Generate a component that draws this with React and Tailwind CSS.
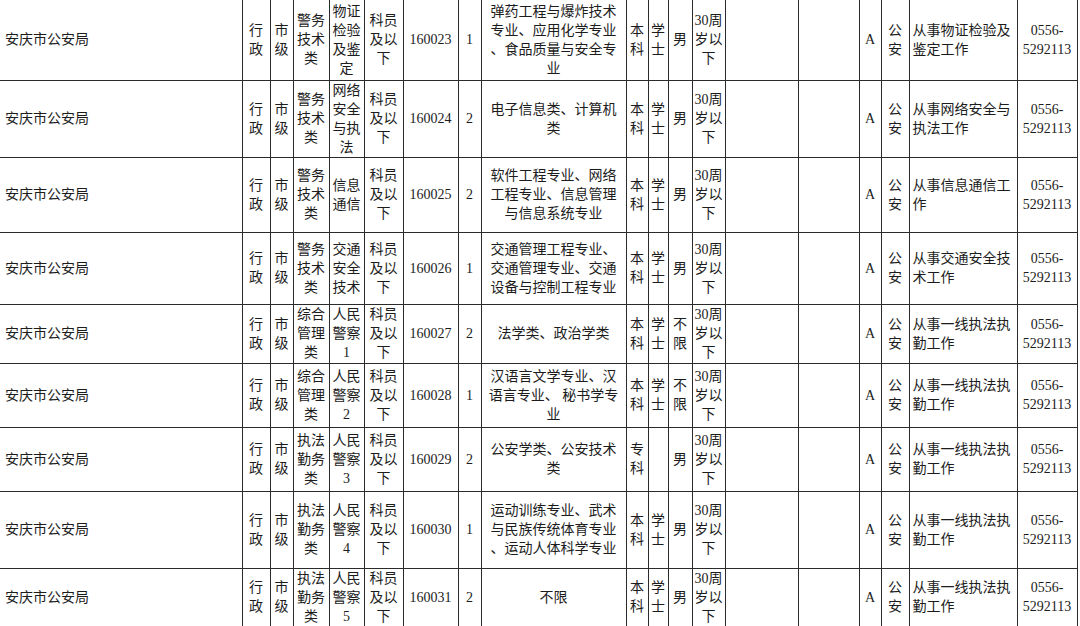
import React from 'react';

const colWidths = [242, 28, 23, 36, 35, 39, 55, 23, 145, 22, 20, 24, 33, 73, 61, 22, 28, 108, 60];

const rows = [
    { h: 80, type: ['行', '政'], level: ['市', '级'], cat: ['警务', '技术', '类'], post: ['物证', '检验', '及鉴', '定'], code: '160023', num: '1',
        major: ['弹药工程与爆炸技术', '专业、应用化学专业', '、食品质量与安全专', '业'], edu: ['本', '科'], deg: ['学', '士'], sex: ['男'], duty: ['从事物证检验及', '鉴定工作'] },
    { h: 76, type: ['行', '政'], level: ['市', '级'], cat: ['警务', '技术', '类'], post: ['网络', '安全', '与执', '法'], code: '160024', num: '2',
        major: ['电子信息类、计算机', '类'], edu: ['本', '科'], deg: ['学', '士'], sex: ['男'], duty: ['从事网络安全与', '执法工作'] },
    { h: 75, type: ['行', '政'], level: ['市', '级'], cat: ['警务', '技术', '类'], post: ['信息', '通信'], code: '160025', num: '2',
        major: ['软件工程专业、网络', '工程专业、信息管理', '与信息系统专业'], edu: ['本', '科'], deg: ['学', '士'], sex: ['男'], duty: ['从事信息通信工', '作'] },
    { h: 72, type: ['行', '政'], level: ['市', '级'], cat: ['警务', '技术', '类'], post: ['交通', '安全', '技术'], code: '160026', num: '1',
        major: ['交通管理工程专业、', '交通管理专业、交通', '设备与控制工程专业'], edu: ['本', '科'], deg: ['学', '士'], sex: ['男'], duty: ['从事交通安全技', '术工作'] },
    { h: 59, type: ['行', '政'], level: ['市', '级'], cat: ['综合', '管理', '类'], post: ['人民', '警察', '1'], code: '160027', num: '2',
        major: ['法学类、政治学类'], edu: ['本', '科'], deg: ['学', '士'], sex: ['不', '限'], duty: ['从事一线执法执', '勤工作'] },
    { h: 64, type: ['行', '政'], level: ['市', '级'], cat: ['综合', '管理', '类'], post: ['人民', '警察', '2'], code: '160028', num: '1',
        major: ['汉语言文学专业、汉', '语言专业、 秘书学专', '业'], edu: ['本', '科'], deg: ['学', '士'], sex: ['不', '限'], duty: ['从事一线执法执', '勤工作'] },
    { h: 64, type: ['行', '政'], level: ['市', '级'], cat: ['执法', '勤务', '类'], post: ['人民', '警察', '3'], code: '160029', num: '2',
        major: ['公安学类、公安技术', '类'], edu: ['专', '科'], deg: [], sex: ['男'], duty: ['从事一线执法执', '勤工作'] },
    { h: 77, type: ['行', '政'], level: ['市', '级'], cat: ['执法', '勤务', '类'], post: ['人民', '警察', '4'], code: '160030', num: '1',
        major: ['运动训练专业、武术', '与民族传统体育专业', '、运动人体科学专业'], edu: ['本', '科'], deg: ['学', '士'], sex: ['男'], duty: ['从事一线执法执', '勤工作'] },
    { h: 58, type: ['行', '政'], level: ['市', '级'], cat: ['执法', '勤务', '类'], post: ['人民', '警察', '5'], code: '160031', num: '2',
        major: ['不限'], edu: ['本', '科'], deg: ['学', '士'], sex: ['男'], duty: ['从事一线执法执', '勤工作'] },
];

const Lines = ({ lines }) => (
    <>
        {lines.map((line, i) => (
            <React.Fragment key={i}>
                {i > 0 && <br />}
                {line}
            </React.Fragment>
        ))}
    </>
);

const cell = 'border border-[#2b2b2b] p-0 text-center align-middle whitespace-nowrap';

const App = () => {
    return (
        <div
            className="w-[1080px] h-[626px] overflow-hidden bg-white text-[#1c1c1c] text-[14px] leading-[19px]"
            style={{ fontFamily: '"Liberation Serif", "Noto Sans CJK SC", serif' }}
        >
            <table className="table-fixed border-collapse w-[1077px] [&_tr:first-child_td]:border-t-0 [&_td:first-child]:border-l-0">
                <colgroup>
                    {colWidths.map((w, i) => (
                        <col key={i} style={{ width: w }} />
                    ))}
                </colgroup>
                <tbody>
                    {rows.map((r) => (
                        <tr key={r.code} style={{ height: r.h }}>
                            <td className="border border-[#2b2b2b] pl-[5px] text-left align-middle whitespace-nowrap">安庆市公安局</td>
                            <td className={cell}><Lines lines={r.type} /></td>
                            <td className={cell}><Lines lines={r.level} /></td>
                            <td className={cell}><Lines lines={r.cat} /></td>
                            <td className={cell}><Lines lines={r.post} /></td>
                            <td className={cell}><Lines lines={['科员', '及以', '下']} /></td>
                            <td className={cell}>{r.code}</td>
                            <td className={cell}>{r.num}</td>
                            <td className={cell}><Lines lines={r.major} /></td>
                            <td className={cell}><Lines lines={r.edu} /></td>
                            <td className={cell}><Lines lines={r.deg} /></td>
                            <td className={cell}><Lines lines={r.sex} /></td>
                            <td className={cell}><Lines lines={['30周', '岁以', '下']} /></td>
                            <td className={cell}></td>
                            <td className={cell}></td>
                            <td className={cell}>A</td>
                            <td className={cell}><Lines lines={['公', '安']} /></td>
                            <td className="border border-[#2b2b2b] pl-[3px] text-left align-middle whitespace-nowrap"><Lines lines={r.duty} /></td>
                            <td className={cell}><Lines lines={['0556-', '5292113']} /></td>
                        </tr>
                    ))}
                </tbody>
            </table>
        </div>
    );
};

export default App;
